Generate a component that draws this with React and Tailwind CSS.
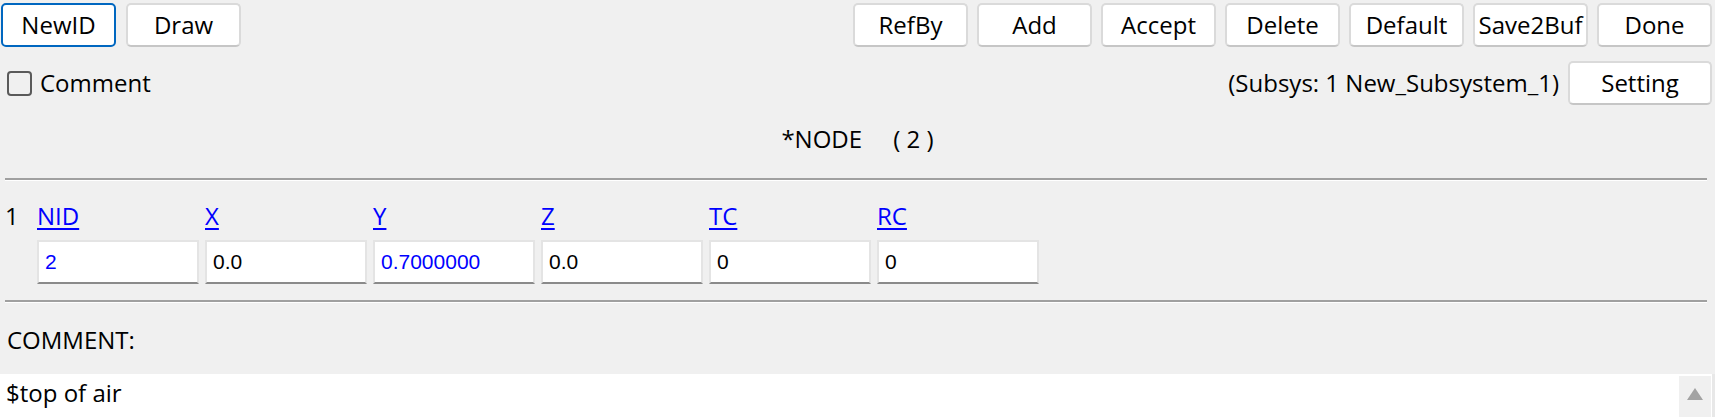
import React from "react";

const leftButtons = ["NewID", "Draw"];
const rightButtons = ["RefBy", "Add", "Accept", "Delete", "Default", "Save2Buf", "Done"];

const fields = [
    { label: "NID", value: "2", blue: true },
    { label: "X", value: "0.0" },
    { label: "Y", value: "0.7000000", blue: true },
    { label: "Z", value: "0.0" },
    { label: "TC", value: "0" },
    { label: "RC", value: "0" },
];

// Plain white button with a thin grey frame
function Btn({ children, active, className = "" }) {
    return (
        <button
            className={
                "h-[44px] bg-white rounded-[5px] flex items-center justify-center leading-none " +
                (active
                    ? "border-2 border-[#0067c0] "
                    : "border-2 border-[#dadada] border-b-[#c6c6c6] ") +
                className
            }
        >
            {children}
        </button>
    );
}

function Separator() {
    return (
        <div className="ml-[5px] mr-[8px]">
            <div className="h-[2px] bg-[#a0a0a0]" />
            <div className="h-[1px] bg-white" />
        </div>
    );
}

export default function App() {
    return (
        <div className="w-[1715px] h-[417px] overflow-hidden bg-[#f0f0f0] text-black text-[24px] font-['Open_Sans',sans-serif]">
            {/* top toolbar */}
            <div className="flex justify-between pt-[3px] pl-[1px] pr-[3px]">
                <div className="flex gap-[10px]">
                    {leftButtons.map((b, i) => (
                        <Btn key={b} active={i === 0} className="w-[115px]">{b}</Btn>
                    ))}
                </div>
                <div className="flex gap-[9px]">
                    {rightButtons.map((b) => (
                        <Btn key={b} className="w-[115px]">{b}</Btn>
                    ))}
                </div>
            </div>

            {/* comment toggle + subsystem */}
            <div className="mt-[14px] flex items-center justify-between pl-[7px] pr-[3px] h-[44px]">
                <label className="flex items-center gap-[8px]">
                    <span className="w-[25px] h-[25px] rounded-[4px] border-2 border-[#5a5a5a]" />
                    <span>Comment</span>
                </label>
                <div className="flex items-center gap-[9px]">
                    <span>(Subsys: 1 New_Subsystem_1)</span>
                    <Btn className="w-[144px]">Setting</Btn>
                </div>
            </div>

            {/* title */}
            <div className="mt-[18px] h-[32px] leading-[32px] text-center whitespace-pre">*NODE     ( 2 )</div>

            <div className="mt-[23px]">
                <Separator />
            </div>

            {/* card row */}
            <div className="mt-[19px] flex">
                <div className="w-[37px] pl-[5px] h-[32px] leading-[32px]">1</div>
                <div className="flex flex-col gap-[8px]">
                    <div className="flex gap-[6px]">
                        {fields.map((f) => (
                            <div key={f.label} className="w-[162px] h-[32px] leading-[32px]">
                                <span className="text-[#0000ff] underline decoration-2 underline-offset-[3px]">{f.label}</span>
                            </div>
                        ))}
                    </div>
                    <div className="flex gap-[6px]">
                        {fields.map((f) => (
                            <div
                                key={f.label}
                                className={
                                    "w-[162px] h-[44px] bg-white border-2 border-[#e4e4e4] border-b-[#8a8a8a] flex items-center pl-[6px] text-[21px] font-['Liberation_Sans',Arial,sans-serif] " +
                                    (f.blue ? "text-[#0000ff]" : "text-black")
                                }
                            >
                                {f.value}
                            </div>
                        ))}
                    </div>
                </div>
            </div>

            <div className="mt-[16px]">
                <Separator />
            </div>

            {/* comment box */}
            <div className="mt-[21px] pl-[7px] h-[32px] leading-[32px]">COMMENT:</div>
            <div className="mt-[18px] h-[43px] bg-white flex border-r-[3px] border-[#e8e8e8]">
                <div className="flex-1 pl-[6px] pt-[3px] leading-[32px]">$top of air</div>
                <div className="mt-[2px] mr-[1px] w-[32px] bg-[#f0f0f0] flex justify-center pt-[12px]">
                    <svg width="16" height="12" viewBox="0 0 16 12">
                        <polygon points="8,0 16,12 0,12" fill="#a3a3a3" />
                    </svg>
                </div>
            </div>
        </div>
    );
}
